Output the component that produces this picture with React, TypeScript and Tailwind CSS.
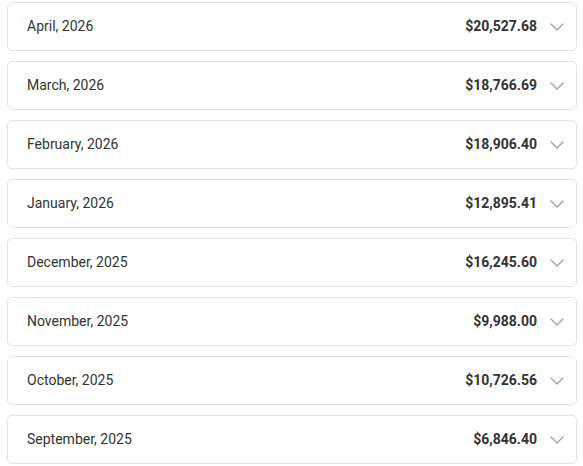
const months = [
  { label: 'April, 2026', total: '$20,527.68' },
  { label: 'March, 2026', total: '$18,766.69' },
  { label: 'February, 2026', total: '$18,906.40' },
  { label: 'January, 2026', total: '$12,895.41' },
  { label: 'December, 2025', total: '$16,245.60' },
  { label: 'November, 2025', total: '$9,988.00' },
  { label: 'October, 2025', total: '$10,726.56' },
  { label: 'September, 2025', total: '$6,846.40' },
]

function Chevron() {
  return (
    <svg width="14" height="8" viewBox="0 0 14 8" fill="none" className="shrink-0">
      <polyline points="1,1 7,7 13,1" stroke="#9aa0a6" strokeWidth="1.3" strokeLinecap="round" strokeLinejoin="round" />
    </svg>
  )
}

export default function App() {
  return (
    <div className="min-h-[466px] bg-white pl-[7px] pr-[6px] pt-[2px]" style={{ fontFamily: 'Roboto, "Liberation Sans", sans-serif' }}>
      <div className="flex flex-col gap-[10px]">
        {months.map((m) => (
          <div
            key={m.label}
            className="flex h-[49px] items-center rounded-[5px] border border-[#e3e3e3] bg-white pl-[19px] pr-[12px]"
          >
            <span className="flex-1 text-[14px] text-[#333333]">{m.label}</span>
            <span className="text-[14px] font-bold text-[#333333]">{m.total}</span>
            <span className="ml-[13px]">
              <Chevron />
            </span>
          </div>
        ))}
      </div>
    </div>
  )
}
